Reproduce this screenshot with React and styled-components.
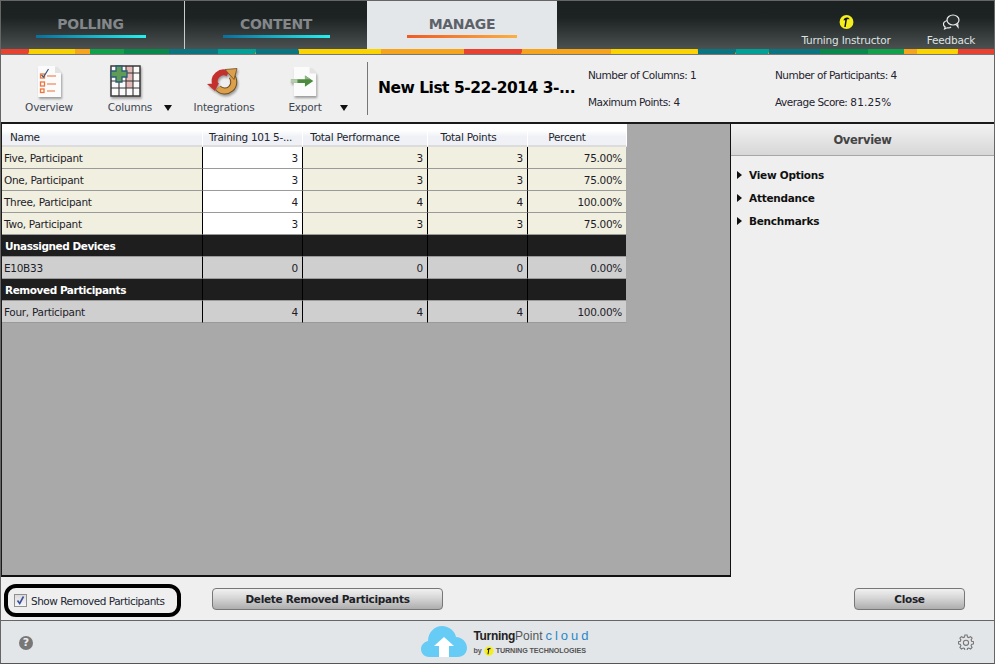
import React from "react";
import styled, { createGlobalStyle } from "styled-components";

const Global = createGlobalStyle`
  html, body { margin: 0; padding: 0; background: #efefef; }
  * { box-sizing: border-box; }
  body { font-family: "DejaVu Sans", "Liberation Sans", sans-serif; font-size: 10.5px; color: #1b1b1b; }
`;
const Page = styled.div`
  width: 995px; height: 664px; display: flex; flex-direction: column;
  border: 1px solid #666; border-bottom: 1px solid #555; overflow: hidden; background: #efefef;
`;
const Nav = styled.div`
  height: 48px; flex: none; display: flex; background: linear-gradient(#1b2121 0%, #1d2323 35%, #4a5150 100%);
`;
const Tab = styled.div`
  width: ${p => p.$w}px; flex: none; display: flex; flex-direction: column; align-items: center; padding-top: 14px;
  padding-right: ${p => p.$pr || 0}px;
  background: ${p => p.$active ? "#e3e7ea" : "transparent"};
  border-right: ${p => p.$sep ? "1px solid #c9cccc" : "none"};
`;
const TabLabel = styled.div`
  font-family: "DejaVu Sans", sans-serif; font-size: 14px; font-weight: 700; line-height: 18px; letter-spacing: -0.3px;
  color: ${p => p.$active ? "#5d6269" : "#84878a"};
`;
const TabLine = styled.div`
  width: ${p => p.$w}px; height: 3px; margin-top: 2px;
  background: ${p => p.$active ? "linear-gradient(90deg,#f15a24,#fbb040)" : "linear-gradient(90deg,#0a6f9c,#27f0ee)"};
`;
const NavSpacer = styled.div`flex: 1;`;
const NavAction = styled.div`
  width: ${p => p.$w}px; flex: none; display: flex; flex-direction: column; align-items: center; padding-top: 12px;
  margin-right: ${p => p.$mr}px; color: #dfe2e2; font-size: 10.5px; letter-spacing: -.2px;
  svg { display: block; height: 18px; margin-bottom: 3px; }
`;
const Strip = styled.svg`display: block; flex: none; width: 993px; height: 5px;`;
const Toolbar = styled.div`
  height: 68px; flex: none; display: flex; align-items: stretch; border-top: 1px solid #777; background: #efefef;
`;
const Tool = styled.div`
  width: ${p => p.$w}px; flex: none; position: relative; display: flex; flex-direction: column; align-items: center; padding-top: 10px;
  padding-right: ${p => p.$pr || 0}px;
  color: #40464f; font-size: 10.5px; letter-spacing: -.2px;
`;
const ToolIcon = styled.svg`
  display: block; height: 33px; margin-bottom: 3px; margin-left: ${p => p.$shift || 0}px; overflow: visible;
  filter: drop-shadow(1px 2px 1px rgba(0,0,0,.35));
`;
const Caret = styled.span`
  position: absolute; right: ${p => p.$r}px; top: 50px; width: 0; height: 0;
  border-left: 4px solid transparent; border-right: 4px solid transparent; border-top: 6px solid #111;
`;
const Divider = styled.div`width: 1px; height: 53px; margin: 7px 10px 0 0; background: #777; flex: none;`;
const Title = styled.div`
  width: 210px; flex: none; font-family: "DejaVu Sans", sans-serif; font-weight: 700; font-size: 15.5px; letter-spacing: -.5px; color: #000; padding-top: 24px; white-space: nowrap;
`;
const Stats = styled.div`
  width: ${p => p.$w}px; flex: none; display: flex; flex-direction: column; gap: 14px; padding-top: 14px; color: #1f2430; line-height: 13px; letter-spacing: -.5px;
`;
const Num = styled.span`letter-spacing: .2px;`;
const Middle = styled.div`
  height: 455px; flex: none; display: flex; border-top: 2px solid #1a1a1a; 
`;
const GridArea = styled.div`
  width: 730px; flex: none; background: #a9a9a9; border-left: 1px solid #1a1a1a; border-bottom: 2px solid #111; border-right: 1px solid #111;
`;
const Table = styled.table`
  border-collapse: separate; border-spacing: 0; table-layout: fixed; width: 625px; letter-spacing: -.3px;
`;
const Head = styled.th`
  height: 23px; font-weight: 400; background: linear-gradient(#fff 0 30%, #eff1f6 60%, #eff1f6); border-right: 1px solid #fff; border-bottom: 2px solid #dcdcdc;
  padding: 4px ${p => p.$pr || 0}px 0 0; text-align: center; color: #22262e; white-space: nowrap; overflow: hidden;
  &:first-child { text-align: left; padding-left: 8px; }
`;
const Cell = styled.td`
  height: 22px; padding: 0 4px 0 ${p => p.$dark ? 3 : 2}px; text-align: right; color: ${p => p.$dark ? "#fff" : "#1d1d2a"}; white-space: nowrap;
  background: ${p => p.$bg};
  border-bottom: 1px solid #9a9a9a;
  border-right: 1px solid ${p => p.$edge ? "#a9a9a9" : "#000"};
  font-weight: ${p => p.$dark ? 700 : 400};
  letter-spacing: ${p => p.$dark ? "-.45px" : "-.3px"};
  &:first-child { text-align: left; }
`;
const Side = styled.div`flex: 1; background: #efefef;`;
const SideHead = styled.div`
  height: 32px; display: flex; align-items: center; justify-content: center; font-weight: 700; font-size: 11.5px; letter-spacing: -.3px; color: #444;
  background: linear-gradient(#f2f2f2, #d7d7d7); border-bottom: 1px solid #a6a6a6;
`;
const SideList = styled.div`padding: 7px 0 0 6px; display: flex; flex-direction: column;`;
const SideItem = styled.div`
  height: 23px; display: flex; align-items: center; gap: 7px; font-weight: 700; font-size: 10.5px; letter-spacing: -.25px; color: #111;
  &::before { content: ""; width: 0; height: 0; border-top: 4px solid transparent; border-bottom: 4px solid transparent; border-left: 5px solid #111; }
`;
const Actions = styled.div`
  height: 43px; flex: none; display: flex; align-items: flex-start; padding: 11px 29px 0 211px; justify-content: space-between; position: relative; background: #efefef;
`;
const Annot = styled.div`
  position: absolute; left: 3px; top: 7px; width: 177px; height: 33px; border: 4px solid #000; border-radius: 12px; display: flex; align-items: center; padding-left: 6px; gap: 4px; letter-spacing: -.5px; color: #222733;
`;
const Check = styled.span`
  width: 13px; height: 13px; flex: none; display: flex; align-items: center; justify-content: center; border: 1px solid #8e8f8f; background: linear-gradient(#dcdcdc,#f6f6f6);
`;
const Btn = styled.div`
  width: ${p => p.$w}px; height: 22px; display: flex; align-items: center; justify-content: center; font-weight: 700; font-size: 10.5px; letter-spacing: -.3px; color: #1c2027;
  border: 1px solid #777; border-radius: 4px; background: linear-gradient(#f1f1f1, #d6d6d6 45%, #adadad);
`;
const Footer = styled.div`
  flex: 1; display: flex; align-items: center; justify-content: space-between; background: #e2e6e9; border-top: 1px solid #666; padding: 0 20px 0 18px; position: relative;
`;
const Help = styled.div`
  width: 14px; height: 14px; margin-top: 1px; border-radius: 50%; background: #777; color: #eee; font-size: 11px; font-weight: 700; display: flex; align-items: center; justify-content: center;
`;
const Logo = styled.div`display: flex; align-items: center; gap: 6px; margin: -3px 0 0 22px;`;
const LogoText = styled.div`display: flex; flex-direction: column; gap: 3px; margin-top: 4px;`;
const LogoTop = styled.div`
  font-family: "Liberation Sans", sans-serif; font-size: 12px; line-height: 14px; color: #222; display: flex; align-items: baseline;
  b { font-weight: 700; letter-spacing: -.3px; } span { color: #555; } em { font-style: normal; color: #2a86c7; letter-spacing: 3px; margin-left: 3px; font-size: 13px; }
`;
const LogoBottom = styled.div`
  font-family: "Liberation Sans", sans-serif; font-size: 7.2px; line-height: 10px; color: #555; display: flex; align-items: center; gap: 2px; white-space: nowrap; font-weight: 700; letter-spacing: -.1px;
`;

const segs = [
  ["#e8412f",0,28,1],["#f9d100",28,74,0],["#f7a41d",74,89,0],["#12a14b",89,123,0],["#08894c",123,168,0],["#0a7580",168,217,0],["#00a096",217,255,1],["#0a7580",255,298,-1],
  ["#fbd300",298,380,0],["#f7a41d",380,463,1],["#e8412f",463,521,1],["#f7a41d",521,610,0],["#fbd300",610,697,-1],["#0a7580",697,735,1],["#00a096",735,768,1],["#0a7580",768,819,0],
  ["#08894c",819,867,0],["#12a14b",867,903,0],["#f7a41d",903,916,0],["#fbd300",916,957,1],["#e8412f",957,996,0],
];

const TMark = ({ s = 15 }) => (
  <svg viewBox="0 0 16 16" width={s} height={s} style={{ display: "block" }}>
    <circle cx="8" cy="8" r="7.4" fill="#f5ee1e" />
    <path d="M4.8 6.6C5 4.2 7 3 9 3.200c1.400.1 2.300 1 2 2.200-.8-.8-2-.8-2.600.2L7.200 13.200H5.600L6.700 6.400c-.7-.3-1.400-.2-1.900.2z" fill="#111" />
  </svg>
);

const rows = [
  { n: "Five, Participant", v: ["3","3","3","75.00%"], bg: "#f1efdf", first: "#fff" },
  { n: "One, Participant", v: ["3","3","3","75.00%"], bg: "#f1efdf", first: "#fff" },
  { n: "Three, Participant", v: ["4","4","4","100.00%"], bg: "#f1efdf", first: "#fff" },
  { n: "Two, Participant", v: ["3","3","3","75.00%"], bg: "#f1efdf", first: "#fff" },
  { n: "Unassigned Devices", v: ["","","",""], bg: "#1e1e1e", dark: true },
  { n: "E10B33", v: ["0","0","0","0.00%"], bg: "#cfcfcf" },
  { n: "Removed Participants", v: ["","","",""], bg: "#1e1e1e", dark: true },
  { n: "Four, Participant", v: ["4","4","4","100.00%"], bg: "#cfcfcf" },
];

export default function App() {
  return (
    <>
      <Global />
      <Page>
        <Nav>
          <Tab $w={184} $sep $pr={4}><TabLabel>POLLING</TabLabel><TabLine $w={110} /></Tab>
          <Tab $w={182}><TabLabel>CONTENT</TabLabel><TabLine $w={107} /></Tab>
          <Tab $w={190} $active><TabLabel $active>MANAGE</TabLabel><TabLine $w={110} $active /></Tab>
          <NavSpacer />
          <NavAction $w={110} $mr={15}><TMark s={15} />Turning Instructor</NavAction>
          <NavAction $w={70} $mr={8}>
            <svg viewBox="0 0 20 18" width="20" fill="none" stroke="#ececec" strokeWidth="1.2">
              <path d="M6.500 7.500C3.500 8 2 10 2.600 12c.3 1 1 1.600 1.600 2l-.6 2 2.600-1.200c1.400.3 3 0 3.800-1" />
              <ellipse cx="12" cy="7" rx="6" ry="5" fill="#2a3030" />
              <path d="M15 11.500l2 2.500-.3-3.500" />
            </svg>
            Feedback
          </NavAction>
        </Nav>
        <Strip viewBox="0 0 993 5" preserveAspectRatio="none">
          <rect width="993" height="5" fill="#f7a41d" />
          {segs.map(([c, a, b, s], i) => (
            <polygon key={i} fill={c} points={`${a},0 ${b + s},0 ${b - s},5 ${a},5`} />
          ))}
        </Strip>
        <Toolbar>
          <Tool $w={96}>
            <ToolIcon viewBox="0 0 30 33" width="30">
              <path d="M4 1h17l6 7v24H4z" fill="#fbfbfb" />
              <path d="M21 1l6 7h-6z" fill="#e3e3e3" />
              <g fill="none" stroke="#f0743b" strokeWidth="1.3">
                <rect x="6.500" y="9" width="4" height="4" /><rect x="6.500" y="17" width="4" height="4" /><rect x="6.500" y="24" width="3.500" height="3.500" />
                <path d="M13 11h9M13 19h9M13 26h8" strokeOpacity=".7" />
              </g>
              <path d="M7.500 10l2 2 5-8" fill="none" stroke="#38587c" strokeWidth="1.200" />
            </ToolIcon>
            Overview
          </Tool>
          <Tool $w={84} $pr={18}>
            <ToolIcon $shift={-8} viewBox="0 0 32 33" width="32">
              <rect x="1" y="1" width="29" height="30" fill="#fafafa" />
              <rect x="16" y="1" width="7" height="22" fill="#e3b9b7" />
              <rect x="1" y="1" width="29" height="30" fill="none" stroke="#3a3a3a" strokeWidth="1.500" />
              <g stroke="#333" strokeWidth="1.100"><path d="M1 8h29M1 16h29M1 23h29M9 1v30M16 1v30M23 1v30" /></g>
              <path d="M6 1h6v5h5v6h-5v5H6v-5H1V6h5z" fill="#5f9d57" stroke="#2c5a7a" strokeWidth="1.300" />
            </ToolIcon>
            Columns
            <Caret $r={9} />
          </Tool>
          <Tool $w={86}>
            <ToolIcon $shift={-2} viewBox="0 0 32 33" width="32">
              <path d="M8.500 20A9 9 0 0 1 21 8.500" fill="none" stroke="#c4312c" strokeWidth="6" />
              <path d="M0 19l12-1-4 8z" fill="#c4312c" />
              <path d="M24.500 11A9 9 0 0 1 11 23" fill="none" stroke="#6f4d1f" strokeWidth="7" />
              <path d="M24.500 11A9 9 0 0 1 11 23" fill="none" stroke="#dc9f4b" strokeWidth="5" />
              <path d="M18 4.500l12-1-3 11z" fill="#dc9f4b" stroke="#6f4d1f" strokeWidth=".8" />
            </ToolIcon>
            Integrations
          </Tool>
          <Tool $w={100} $pr={24}>
            <ToolIcon $shift={-3} viewBox="0 0 30 33" width="28">
              <path d="M4 1h17l7 7v24H4z" fill="#fbfbfb" />
              <path d="M21 1l7 7h-7z" fill="#e3e3e3" />
              <path d="M1 14h15v-4l9 6-9 6v-4H1z" fill="#4c8a3f" />
              <path d="M1 14h15v-4l6 4z" fill="#8fb483" />
              <path d="M1 14h7v4H1z" fill="#b5cdae" />
            </ToolIcon>
            Export
            <Caret $r={19} />
          </Tool>
          <Divider />
          <Title>New List 5-22-2014 3-...</Title>
          <Stats $w={187}><div>Number of Columns: 1</div><div>Maximum Points: 4</div></Stats>
          <Stats $w={200}><div>Number of Participants: 4</div><div>Average Score: <Num>81.25%</Num></div></Stats>
        </Toolbar>
        <Middle>
          <GridArea>
            <Table>
              <colgroup>
                <col style={{ width: 201 }} /><col style={{ width: 100 }} /><col style={{ width: 125 }} /><col style={{ width: 100 }} /><col style={{ width: 99 }} />
              </colgroup>
              <thead>
                <tr>
                  <Head>Name</Head><Head $pr={4}>Training 101 5-...</Head><Head $pr={20}>Total Performance</Head><Head $pr={18}>Total Points</Head><Head $pr={20}>Percent</Head>
                </tr>
              </thead>
              <tbody>
                {rows.map(r => (
                  <tr key={r.n}>
                    <Cell $bg={r.bg} $dark={r.dark}>{r.n}</Cell>
                    {r.v.map((v, i) => (
                      <Cell key={i} $bg={i === 0 && r.first ? r.first : r.bg} $edge={i === 3}>{v}</Cell>
                    ))}
                  </tr>
                ))}
              </tbody>
            </Table>
          </GridArea>
          <Side>
            <SideHead>Overview</SideHead>
            <SideList>
              <SideItem>View Options</SideItem>
              <SideItem>Attendance</SideItem>
              <SideItem>Benchmarks</SideItem>
            </SideList>
          </Side>
        </Middle>
        <Actions>
          <Annot>
            <Check>
              <svg viewBox="0 0 11 11" width="11" height="11"><path d="M2.500 5.500l2.200 3L8.500 1.500" fill="none" stroke="#3a4fa0" strokeWidth="1.600" /></svg>
            </Check>
            Show Removed Participants
          </Annot>
          <Btn $w={231}>Delete Removed Participants</Btn>
          <Btn $w={111}>Close</Btn>
        </Actions>
        <Footer>
          <Help>?</Help>
          <Logo>
            <svg viewBox="0 0 46 33" width="46" height="33">
              <path d="M8 33C3 33 0 29 0 25c0-4 3-7 7-8 0-9 7-15 14-15 7 0 13 5 14 11 6 0 11 5 11 11 0 5-4 9-9 9z" fill="#66ccf6" />
              <path d="M23 13l10 9h-5v11h-10V22h-5z" fill="#fff" />
            </svg>
            <LogoText>
              <LogoTop><b>Turning</b><span>Point</span><em>cloud</em></LogoTop>
              <LogoBottom>by <TMark s={10} /> TURNING TECHNOLOGIES</LogoBottom>
            </LogoText>
          </Logo>
          <svg viewBox="0 0 16 16" width="16" height="16" fill="none" stroke="#777" strokeWidth="1.1">
            <path d="M6.900 1h2.200l.4 2 1.300.6 1.800-1 1.500 1.600-1 1.700.5 1.300 2 .5v2.200l-2 .5-.5 1.300 1 1.700-1.500 1.600-1.800-1-1.300.5-.4 2H6.900l-.4-2-1.300-.5-1.800 1-1.500-1.600 1-1.700-.5-1.300-2-.5V7.700l2-.5.5-1.300-1-1.700 1.500-1.600 1.800 1 1.300-.6z" />
            <circle cx="8" cy="8.800" r="2.600" />
          </svg>
        </Footer>
      </Page>
    </>
  );
}
